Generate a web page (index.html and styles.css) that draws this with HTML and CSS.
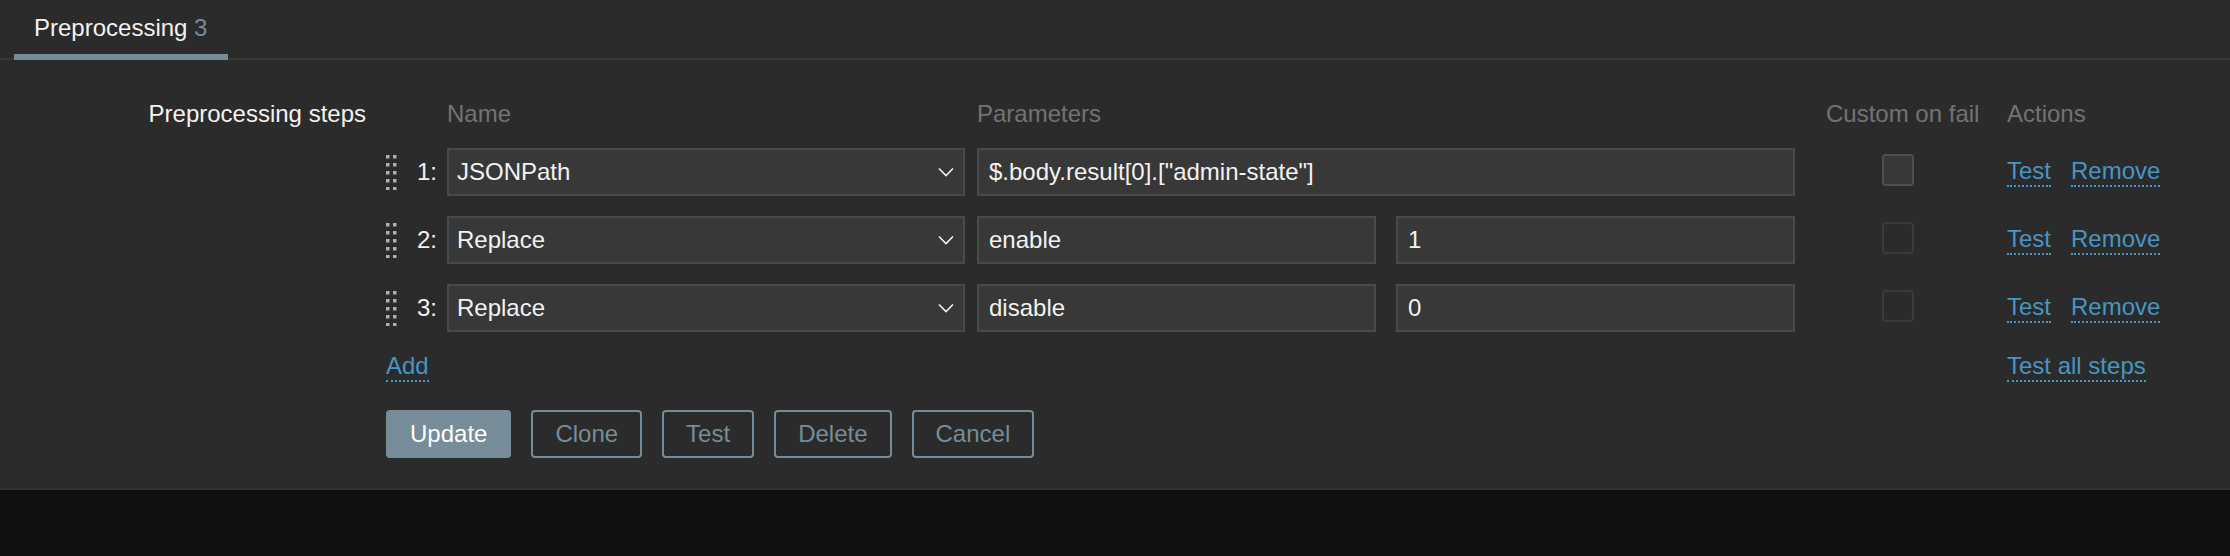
FILE: index.html
```html
<!DOCTYPE html>
<html lang="en">
<head>
<meta charset="utf-8">
<title>Preprocessing</title>
<link rel="stylesheet" href="styles.css">
</head>
<body>
<div class="panel">
  <nav class="tabs">
    <div class="tab active">Preprocessing <span class="count">3</span></div>
  </nav>
  <div class="form">
    <div class="form-row">
      <div class="label">Preprocessing steps</div>
      <div class="steps">
        <div class="th th-name">Name</div>
        <div class="th th-params">Parameters</div>
        <div class="th th-custom">Custom on fail</div>
        <div class="th th-actions">Actions</div>

        <div class="handle"><svg width="11" height="35" viewBox="0 0 11 35"><g fill="#a9b3ba"><rect x="0" y="0" width="3.5" height="3.5"/><rect x="7" y="0" width="3.5" height="3.5"/><rect x="0" y="8" width="3.5" height="3.5"/><rect x="7" y="8" width="3.5" height="3.5"/><rect x="0" y="16" width="3.5" height="3.5"/><rect x="7" y="16" width="3.5" height="3.5"/><rect x="0" y="24" width="3.5" height="3.5"/><rect x="7" y="24" width="3.5" height="3.5"/><rect x="0" y="32" width="3.5" height="3"/><rect x="7" y="32" width="3.5" height="3"/></g></svg></div>
        <div class="num">1:</div>
        <div class="cell"><div class="select"><span>JSONPath</span><svg class="chev" width="16" height="10" viewBox="0 0 16 10"><polyline points="1,1.5 8,8.5 15,1.5" fill="none" stroke="#f2f2f2" stroke-width="1.6"/></svg></div></div>
        <div class="params"><div class="input wide">$.body.result[0].["admin-state"]</div></div>
        <div class="check-cell"><span class="checkbox enabled"></span></div>
        <div class="actions"><a class="link">Test</a><a class="link">Remove</a></div>

        <div class="handle"><svg width="11" height="35" viewBox="0 0 11 35"><g fill="#a9b3ba"><rect x="0" y="0" width="3.5" height="3.5"/><rect x="7" y="0" width="3.5" height="3.5"/><rect x="0" y="8" width="3.5" height="3.5"/><rect x="7" y="8" width="3.5" height="3.5"/><rect x="0" y="16" width="3.5" height="3.5"/><rect x="7" y="16" width="3.5" height="3.5"/><rect x="0" y="24" width="3.5" height="3.5"/><rect x="7" y="24" width="3.5" height="3.5"/><rect x="0" y="32" width="3.5" height="3"/><rect x="7" y="32" width="3.5" height="3"/></g></svg></div>
        <div class="num">2:</div>
        <div class="cell"><div class="select"><span>Replace</span><svg class="chev" width="16" height="10" viewBox="0 0 16 10"><polyline points="1,1.5 8,8.5 15,1.5" fill="none" stroke="#f2f2f2" stroke-width="1.6"/></svg></div></div>
        <div class="params"><div class="input">enable</div><div class="input">1</div></div>
        <div class="check-cell"><span class="checkbox"></span></div>
        <div class="actions"><a class="link">Test</a><a class="link">Remove</a></div>

        <div class="handle"><svg width="11" height="35" viewBox="0 0 11 35"><g fill="#a9b3ba"><rect x="0" y="0" width="3.5" height="3.5"/><rect x="7" y="0" width="3.5" height="3.5"/><rect x="0" y="8" width="3.5" height="3.5"/><rect x="7" y="8" width="3.5" height="3.5"/><rect x="0" y="16" width="3.5" height="3.5"/><rect x="7" y="16" width="3.5" height="3.5"/><rect x="0" y="24" width="3.5" height="3.5"/><rect x="7" y="24" width="3.5" height="3.5"/><rect x="0" y="32" width="3.5" height="3"/><rect x="7" y="32" width="3.5" height="3"/></g></svg></div>
        <div class="num">3:</div>
        <div class="cell"><div class="select"><span>Replace</span><svg class="chev" width="16" height="10" viewBox="0 0 16 10"><polyline points="1,1.5 8,8.5 15,1.5" fill="none" stroke="#f2f2f2" stroke-width="1.6"/></svg></div></div>
        <div class="params"><div class="input">disable</div><div class="input">0</div></div>
        <div class="check-cell"><span class="checkbox"></span></div>
        <div class="actions"><a class="link">Test</a><a class="link">Remove</a></div>

        <div class="add"><a class="link">Add</a></div>
        <div class="test-all"><a class="link">Test all steps</a></div>
      </div>
    </div>
    <div class="form-row">
      <div class="label"></div>
      <div class="buttons">
        <button class="btn primary">Update</button>
        <button class="btn">Clone</button>
        <button class="btn">Test</button>
        <button class="btn">Delete</button>
        <button class="btn">Cancel</button>
      </div>
    </div>
  </div>
</div>
</body>
</html>
```

FILE: styles.css
```css
html, body {
  margin: 0;
  padding: 0;
  background: #0e1012;
}
body {
  font-family: "Liberation Sans", Arial, sans-serif;
  font-size: 24px;
  line-height: 28px;
  color: #f2f2f2;
}
.panel {
  background: #2b2b2b;
  border-bottom: 2px solid #333333;
  height: 488px;
}
.tabs {
  display: flex;
  align-items: flex-start;
  height: 58px;
  padding-left: 14px;
  border-bottom: 2px solid #383838;
}
.tab {
  padding: 14px 21px 12px 20px;
  border-bottom: 6px solid #768d99;
  color: #f2f2f2;
  white-space: nowrap;
}
.tab .count {
  color: #768d99;
}
.form {
  padding-top: 40px;
}
.form-row {
  display: grid;
  grid-template-columns: 386px 1fr;
}
.label {
  text-align: right;
  padding-right: 20px;
  box-sizing: border-box;
  line-height: 28px;
}
.steps {
  display: grid;
  grid-template-columns: 24px 37px 530px 829px 201px 1fr;
  grid-template-rows: 28px 48px 48px 48px 30px;
  row-gap: 20px;
}
.th {
  color: #737373;
  white-space: nowrap;
}
.th-name { grid-column: 3; }
.th-params { grid-column: 4; }
.th-custom { grid-column: 5; padding-left: 20px; }
.th-actions { grid-column: 6; }

.handle {
  grid-column: 1;
  display: flex;
  align-items: center;
}
.handle svg { display: block; }
.num {
  display: flex;
  align-items: center;
  justify-content: flex-end;
  padding-right: 10px;
}
.cell {
  display: flex;
  align-items: stretch;
}
.select {
  width: 518px;
  box-sizing: border-box;
  display: flex;
  align-items: center;
  justify-content: space-between;
  padding: 0 9px 0 8px;
  background: #383838;
  border: 2px solid #4a4a4a;
}
.chev { display: block; }
.params {
  display: flex;
  gap: 20px;
  width: 818px;
}
.input {
  flex: 1 1 0;
  box-sizing: border-box;
  display: flex;
  align-items: center;
  padding: 0 10px;
  background: #383838;
  border: 2px solid #4a4a4a;
  white-space: nowrap;
}
.check-cell {
  display: flex;
  align-items: center;
  padding-left: 76px;
}
.checkbox {
  display: block;
  width: 32px;
  height: 32px;
  box-sizing: border-box;
  border: 2px solid #3b3b3b;
  border-radius: 4px;
  background: #2b2b2b;
  margin-top: -4px;
}
.checkbox.enabled {
  border-color: #4f4f4f;
  background: #383838;
}
.actions {
  display: flex;
  align-items: center;
  gap: 20px;
}
.link {
  color: #4796c4;
  border-bottom: 2px dotted #4796c4;
  line-height: 28px;
  cursor: pointer;
  white-space: nowrap;
}
.add {
  grid-column: 1 / 4;
  display: flex;
  align-items: flex-start;
}
.test-all {
  grid-column: 6;
  display: flex;
  align-items: flex-start;
}
.buttons {
  display: flex;
  gap: 20px;
  margin-top: 28px;
}
.btn {
  font-family: "Liberation Sans", Arial, sans-serif;
  font-size: 24px;
  height: 48px;
  line-height: 44px;
  padding: 0 22px;
  border: 2px solid #768d99;
  border-radius: 4px;
  background: transparent;
  color: #768d99;
  cursor: pointer;
}
.btn.primary {
  background: #768d99;
  color: #ffffff;
}
```
